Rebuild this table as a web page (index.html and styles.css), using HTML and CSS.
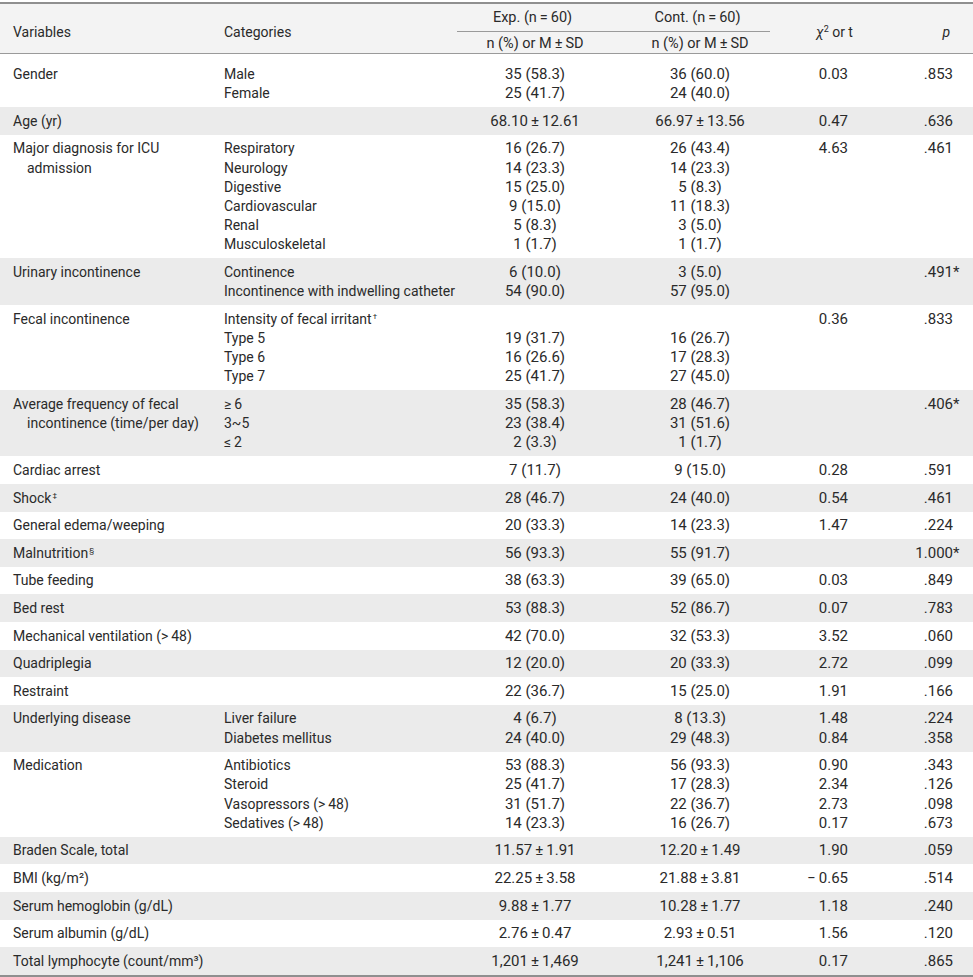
FILE: index.html
```html
<!DOCTYPE html>
<html lang="en">
<head>
<meta charset="utf-8">
<title>Table</title>
<link rel="stylesheet" href="styles.css">
</head>
<body>
<table class="tbl">
  <colgroup>
    <col class="c-var"><col class="c-cat"><col class="c-exp"><col class="c-cont"><col class="c-stat"><col class="c-p">
  </colgroup>
  <thead>
    <tr class="h1">
      <th rowspan="2" class="var">Variables</th>
      <th rowspan="2" class="cat">Categories</th>
      <th colspan="2" class="grp"><div class="grp-in"><span class="g-exp">Exp. (n&#8201;=&#8201;60)</span><span class="g-cont">Cont. (n&#8201;=&#8201;60)</span></div></th>
      <th rowspan="2" class="stat-h"><i class="chi">χ</i><sup>2</sup> or t</th>
      <th rowspan="2" class="p-h"><i>p</i></th>
    </tr>
    <tr class="h2">
      <th class="num">n (%) or M&#8201;±&#8201;SD</th>
      <th class="num">n (%) or M&#8201;±&#8201;SD</th>
    </tr>
  </thead>
  <tbody>
    <tr class="first">
      <td class="var">Gender</td>
      <td class="cat">Male<br>Female</td>
      <td class="num">35 (58.3)<br>25 (41.7)</td>
      <td class="num">36 (60.0)<br>24 (40.0)</td>
      <td class="stat">0.03</td>
      <td class="pv">.853</td>
    </tr>
    <tr>
      <td class="var">Age (yr)</td>
      <td class="cat"></td>
      <td class="num">68.10&#8201;±&#8201;12.61</td>
      <td class="num">66.97&#8201;±&#8201;13.56</td>
      <td class="stat">0.47</td>
      <td class="pv">.636</td>
    </tr>
    <tr>
      <td class="var hang">Major diagnosis for ICU<br>admission</td>
      <td class="cat">Respiratory<br>Neurology<br>Digestive<br>Cardiovascular<br>Renal<br>Musculoskeletal</td>
      <td class="num">16 (26.7)<br>14 (23.3)<br>15 (25.0)<br>9 (15.0)<br>5 (8.3)<br>1 (1.7)</td>
      <td class="num">26 (43.4)<br>14 (23.3)<br>5 (8.3)<br>11 (18.3)<br>3 (5.0)<br>1 (1.7)</td>
      <td class="stat">4.63</td>
      <td class="pv">.461</td>
    </tr>
    <tr>
      <td class="var">Urinary incontinence</td>
      <td class="cat">Continence<br>Incontinence with indwelling catheter</td>
      <td class="num">6 (10.0)<br>54 (90.0)</td>
      <td class="num">3 (5.0)<br>57 (95.0)</td>
      <td class="stat"></td>
      <td class="pv">.491<span class="ast">*</span></td>
    </tr>
    <tr>
      <td class="var">Fecal incontinence</td>
      <td class="cat">Intensity of fecal irritant<sup>†</sup><br>Type 5<br>Type 6<br>Type 7</td>
      <td class="num"><br>19 (31.7)<br>16 (26.6)<br>25 (41.7)</td>
      <td class="num"><br>16 (26.7)<br>17 (28.3)<br>27 (45.0)</td>
      <td class="stat">0.36</td>
      <td class="pv">.833</td>
    </tr>
    <tr>
      <td class="var hang">Average frequency of fecal<br>incontinence (time/per day)</td>
      <td class="cat">≥&#8201;6<br>3~5<br>≤&#8201;2</td>
      <td class="num">35 (58.3)<br>23 (38.4)<br>2 (3.3)</td>
      <td class="num">28 (46.7)<br>31 (51.6)<br>1 (1.7)</td>
      <td class="stat"></td>
      <td class="pv">.406<span class="ast">*</span></td>
    </tr>
    <tr>
      <td class="var">Cardiac arrest</td>
      <td class="cat"></td>
      <td class="num">7 (11.7)</td>
      <td class="num">9 (15.0)</td>
      <td class="stat">0.28</td>
      <td class="pv">.591</td>
    </tr>
    <tr>
      <td class="var">Shock<sup>‡</sup></td>
      <td class="cat"></td>
      <td class="num">28 (46.7)</td>
      <td class="num">24 (40.0)</td>
      <td class="stat">0.54</td>
      <td class="pv">.461</td>
    </tr>
    <tr>
      <td class="var">General edema/weeping</td>
      <td class="cat"></td>
      <td class="num">20 (33.3)</td>
      <td class="num">14 (23.3)</td>
      <td class="stat">1.47</td>
      <td class="pv">.224</td>
    </tr>
    <tr>
      <td class="var">Malnutrition<sup>§</sup></td>
      <td class="cat"></td>
      <td class="num">56 (93.3)</td>
      <td class="num">55 (91.7)</td>
      <td class="stat"></td>
      <td class="pv">1.000<span class="ast">*</span></td>
    </tr>
    <tr>
      <td class="var">Tube feeding</td>
      <td class="cat"></td>
      <td class="num">38 (63.3)</td>
      <td class="num">39 (65.0)</td>
      <td class="stat">0.03</td>
      <td class="pv">.849</td>
    </tr>
    <tr>
      <td class="var">Bed rest</td>
      <td class="cat"></td>
      <td class="num">53 (88.3)</td>
      <td class="num">52 (86.7)</td>
      <td class="stat">0.07</td>
      <td class="pv">.783</td>
    </tr>
    <tr>
      <td class="var">Mechanical ventilation (&gt;&#8201;48)</td>
      <td class="cat"></td>
      <td class="num">42 (70.0)</td>
      <td class="num">32 (53.3)</td>
      <td class="stat">3.52</td>
      <td class="pv">.060</td>
    </tr>
    <tr>
      <td class="var">Quadriplegia</td>
      <td class="cat"></td>
      <td class="num">12 (20.0)</td>
      <td class="num">20 (33.3)</td>
      <td class="stat">2.72</td>
      <td class="pv">.099</td>
    </tr>
    <tr>
      <td class="var">Restraint</td>
      <td class="cat"></td>
      <td class="num">22 (36.7)</td>
      <td class="num">15 (25.0)</td>
      <td class="stat">1.91</td>
      <td class="pv">.166</td>
    </tr>
    <tr>
      <td class="var">Underlying disease</td>
      <td class="cat">Liver failure<br>Diabetes mellitus</td>
      <td class="num">4 (6.7)<br>24 (40.0)</td>
      <td class="num">8 (13.3)<br>29 (48.3)</td>
      <td class="stat">1.48<br>0.84</td>
      <td class="pv">.224<br>.358</td>
    </tr>
    <tr>
      <td class="var">Medication</td>
      <td class="cat">Antibiotics<br>Steroid<br>Vasopressors (&gt;&#8201;48)<br>Sedatives (&gt;&#8201;48)</td>
      <td class="num">53 (88.3)<br>25 (41.7)<br>31 (51.7)<br>14 (23.3)</td>
      <td class="num">56 (93.3)<br>17 (28.3)<br>22 (36.7)<br>16 (26.7)</td>
      <td class="stat">0.90<br>2.34<br>2.73<br>0.17</td>
      <td class="pv">.343<br>.126<br>.098<br>.673</td>
    </tr>
    <tr>
      <td class="var">Braden Scale, total</td>
      <td class="cat"></td>
      <td class="num">11.57&#8201;±&#8201;1.91</td>
      <td class="num">12.20&#8201;±&#8201;1.49</td>
      <td class="stat">1.90</td>
      <td class="pv">.059</td>
    </tr>
    <tr>
      <td class="var">BMI (kg/m²)</td>
      <td class="cat"></td>
      <td class="num">22.25&#8201;±&#8201;3.58</td>
      <td class="num">21.88&#8201;±&#8201;3.81</td>
      <td class="stat">−&#8201;0.65</td>
      <td class="pv">.514</td>
    </tr>
    <tr>
      <td class="var">Serum hemoglobin (g/dL)</td>
      <td class="cat"></td>
      <td class="num">9.88&#8201;±&#8201;1.77</td>
      <td class="num">10.28&#8201;±&#8201;1.77</td>
      <td class="stat">1.18</td>
      <td class="pv">.240</td>
    </tr>
    <tr>
      <td class="var">Serum albumin (g/dL)</td>
      <td class="cat"></td>
      <td class="num">2.76&#8201;±&#8201;0.47</td>
      <td class="num">2.93&#8201;±&#8201;0.51</td>
      <td class="stat">1.56</td>
      <td class="pv">.120</td>
    </tr>
    <tr>
      <td class="var">Total lymphocyte (count/mm³)</td>
      <td class="cat"></td>
      <td class="num">1,201&#8201;±&#8201;1,469</td>
      <td class="num">1,241&#8201;±&#8201;1,106</td>
      <td class="stat">0.17</td>
      <td class="pv">.865</td>
    </tr>
  </tbody>
</table>
</body>
</html>
```

FILE: styles.css
```css
html, body {
  margin: 0;
  padding: 0;
  background: #ffffff;
}

body {
  font-family: Roboto, "Noto Sans", sans-serif;
  font-size: 14px;
  color: #2a2a2a;
}

.tbl {
  width: 973px;
  margin-top: 2px;
  border-collapse: collapse;
  table-layout: fixed;
  border-top: 2px solid #8f8f8f;
  border-bottom: 2px solid #8f8f8f;
  line-height: 19.2px;
}

.c-var { width: 220px; }
.c-cat { width: 232px; }
.c-exp { width: 166px; }
.c-cont { width: 164px; }
.c-stat { width: 98px; }
.c-p { width: 93px; }

th, td {
  padding: 4.6px 0 3.8px 0;
  vertical-align: top;
  white-space: nowrap;
  font-weight: normal;
}

td.num, td.stat, td.pv {
  font-size: 15px;
}

thead tr {
  background: #f3f3f3;
}

thead .h2 {
  border-bottom: 1px solid #9a9a9a;
}

thead th {
  vertical-align: middle;
}

thead .var,
thead .cat,
thead .stat-h,
thead .p-h {
  padding-top: 9px;
  padding-bottom: 2px;
}

th.var, td.var {
  text-align: left;
  padding-left: 13px;
}

td.hang {
  padding-left: 27px;
  text-indent: -14px;
}

th.cat, td.cat {
  text-align: left;
  padding-left: 4px;
}

.grp {
  padding: 0;
}

.grp-in {
  margin: 0 12px 0 5px;
  border-bottom: 1px solid #9a9a9a;
  display: grid;
  grid-template-columns: 161px 1fr;
  padding: 4px 0;
  font-size: 14.5px;
}

.g-exp {
  text-align: center;
  padding-right: 10px;
}

.g-cont {
  text-align: center;
  padding-left: 7px;
}

thead .h2 th {
  padding: 2px 0 0 0;
  font-size: 14.5px;
}

.num {
  text-align: center;
}

.stat-h {
  text-align: center;
  padding-left: 7px;
}

.stat-h sup {
  font-size: 9px;
  line-height: 0;
  vertical-align: 5px;
}

.p-h {
  text-align: right;
  padding-right: 23px;
}

td.stat {
  text-align: right;
  padding-right: 32px;
}

td.pv {
  text-align: right;
  padding-right: 20px;
}

.ast {
  display: inline-block;
  width: 0;
  text-indent: 0;
  overflow: visible;
}

tbody tr:nth-child(even) {
  background: #ebebeb;
}

tbody tr.first td {
  padding-top: 10.6px;
}

td sup {
  font-size: 8px;
  line-height: 0;
  vertical-align: 5px;
  margin-left: 1px;
}
```
